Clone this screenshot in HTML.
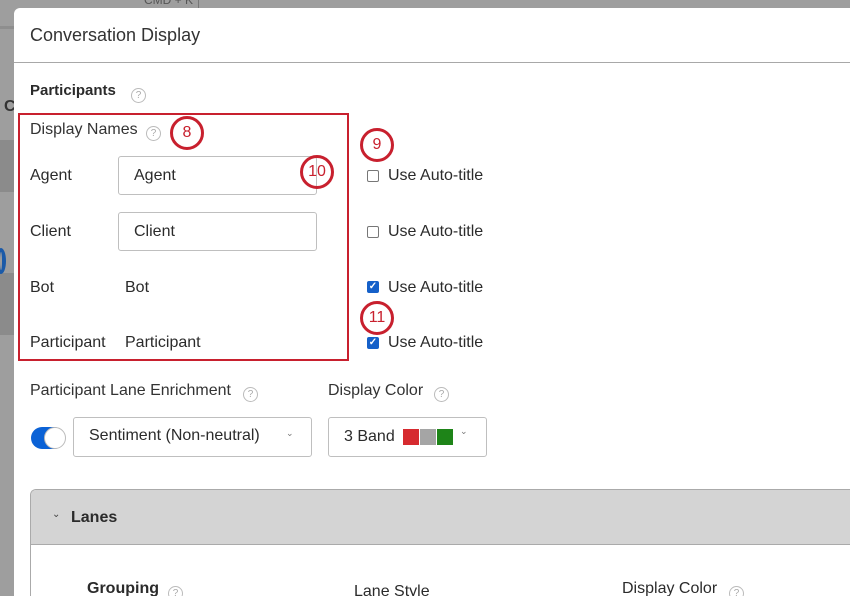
<!DOCTYPE html>
<html><head><meta charset="utf-8"><style>
*{box-sizing:border-box;margin:0;padding:0}
html,body{width:850px;height:596px;overflow:hidden}
body{background:#9e9e9e;font-family:"Liberation Sans",sans-serif;color:#2b2b2b;position:relative}
.a{position:absolute}
.modal{position:absolute;left:14px;top:8px;width:836px;height:588px;background:#fff;border-radius:6px 0 0 0}
.t{position:absolute;font-size:16px;white-space:nowrap}
.q{position:absolute;width:15px;height:15px;border:1px solid #bbb;border-radius:50%;font-size:10px;color:#aaa;text-align:center;line-height:13px}
.c{position:absolute;width:34px;height:34px;border:3px solid #c8202e;border-radius:50%;color:#c8202e;font-size:16px;text-align:center;line-height:28px;background:transparent}
.inp{position:absolute;border:1px solid #bfbfbf;border-radius:3px;background:#fff}
.cb{position:absolute;width:12px;height:12px;border:1px solid #777;border-radius:2px;background:#fff}
.cbc{position:absolute;width:12px;height:12px;border-radius:2px;background:#1560c9;color:#fff;font-size:10px;line-height:12px;text-align:center;font-weight:bold}
</style></head><body>
<div class="t" style="left:144px;top:-7px;font-size:12px;color:#555">CMD + K</div>
<div class="a" style="left:198px;top:0;width:1px;height:8px;background:#777"></div>
<div class="a" style="left:0;top:26px;width:14px;height:3px;background:#8e8e8e"></div>
<div class="a" style="left:0;top:140px;width:14px;height:52px;background:#8b8b8b"></div>
<div class="a" style="left:0;top:273px;width:14px;height:62px;background:#8b8b8b"></div>
<div class="a" style="left:-4px;top:248px;width:10px;height:26px;border:4px solid #1b5aa8;border-radius:50%"></div>
<div class="t" style="left:4px;top:98px;font-weight:bold;color:#333">C</div>

<div class="modal"></div>
<div class="t" style="left:30px;top:25px;font-size:18px;color:#333">Conversation Display</div>
<div class="a" style="left:14px;top:62px;width:836px;height:1px;background:#a8a8a8"></div>

<div class="t" style="left:30px;top:82px;font-weight:bold;font-size:15px">Participants</div>
<div class="q" style="left:131px;top:88px">?</div>

<div class="a" style="left:18px;top:113px;width:331px;height:248px;border:2.5px solid #c8202e"></div>
<div class="t" style="left:30px;top:121px;color:#333">Display Names</div>
<div class="q" style="left:146px;top:126px">?</div>

<div class="t" style="left:30px;top:167px">Agent</div>
<div class="inp" style="left:118px;top:156px;width:199px;height:39px"></div>
<div class="t" style="left:134px;top:167px">Agent</div>
<div class="t" style="left:30px;top:223px">Client</div>
<div class="inp" style="left:118px;top:212px;width:199px;height:39px"></div>
<div class="t" style="left:134px;top:223px">Client</div>
<div class="t" style="left:30px;top:279px">Bot</div>
<div class="t" style="left:125px;top:279px">Bot</div>
<div class="t" style="left:30px;top:334px">Participant</div>
<div class="t" style="left:125px;top:334px">Participant</div>

<div class="cb" style="left:367px;top:170px"></div><div class="t" style="left:388px;top:167px">Use Auto-title</div>
<div class="cb" style="left:367px;top:226px"></div><div class="t" style="left:388px;top:223px">Use Auto-title</div>
<div class="cbc" style="left:367px;top:281px">✓</div><div class="t" style="left:388px;top:279px">Use Auto-title</div>
<div class="cbc" style="left:367px;top:337px">✓</div><div class="t" style="left:388px;top:334px">Use Auto-title</div>

<div class="c" style="left:170px;top:116px">8</div>
<div class="c" style="left:360px;top:128px">9</div>
<div class="c" style="left:300px;top:155px">10</div>
<div class="c" style="left:360px;top:301px">11</div>

<div class="t" style="left:30px;top:382px;color:#333">Participant Lane Enrichment</div>
<div class="q" style="left:243px;top:387px">?</div>
<div class="t" style="left:328px;top:382px;color:#333">Display Color</div>
<div class="q" style="left:434px;top:387px">?</div>

<div class="a" style="left:31px;top:427px;width:34px;height:22px;border-radius:11px;background:#0b62d6"></div>
<div class="a" style="left:44px;top:427px;width:22px;height:22px;border-radius:50%;background:#fff;border:1px solid #bbb"></div>
<div class="inp" style="left:73px;top:417px;width:239px;height:40px"></div>
<div class="t" style="left:89px;top:427px">Sentiment (Non-neutral)</div>
<div class="t" style="left:286px;top:428px;font-size:9px;color:#777">⌄</div>
<div class="inp" style="left:328px;top:417px;width:159px;height:40px"></div>
<div class="t" style="left:344px;top:428px">3 Band</div>
<div class="a" style="left:403px;top:429px;width:16px;height:16px;background:#d62a2f"></div>
<div class="a" style="left:420px;top:429px;width:16px;height:16px;background:#a5a5a5"></div>
<div class="a" style="left:437px;top:429px;width:16px;height:16px;background:#1e8418"></div>
<div class="t" style="left:460px;top:426px;font-size:9px;color:#777">⌄</div>

<div class="a" style="left:30px;top:489px;width:820px;height:107px;border:1px solid #aaa;border-bottom:none;border-right:none;border-radius:6px 0 0 0"></div>
<div class="a" style="left:31px;top:490px;width:819px;height:55px;background:#d4d4d4;border-bottom:1px solid #aaa;border-radius:5px 0 0 0"></div>
<div class="t" style="left:52px;top:509px;font-size:10px;color:#444">⌄</div>
<div class="t" style="left:71px;top:509px;font-weight:bold">Lanes</div>
<div class="t" style="left:87px;top:580px;font-weight:bold;font-size:16px">Grouping</div>
<div class="q" style="left:168px;top:586px">?</div>
<div class="t" style="left:354px;top:583px">Lane Style</div>
<div class="t" style="left:622px;top:580px">Display Color</div>
<div class="q" style="left:729px;top:586px">?</div>
</body></html>
